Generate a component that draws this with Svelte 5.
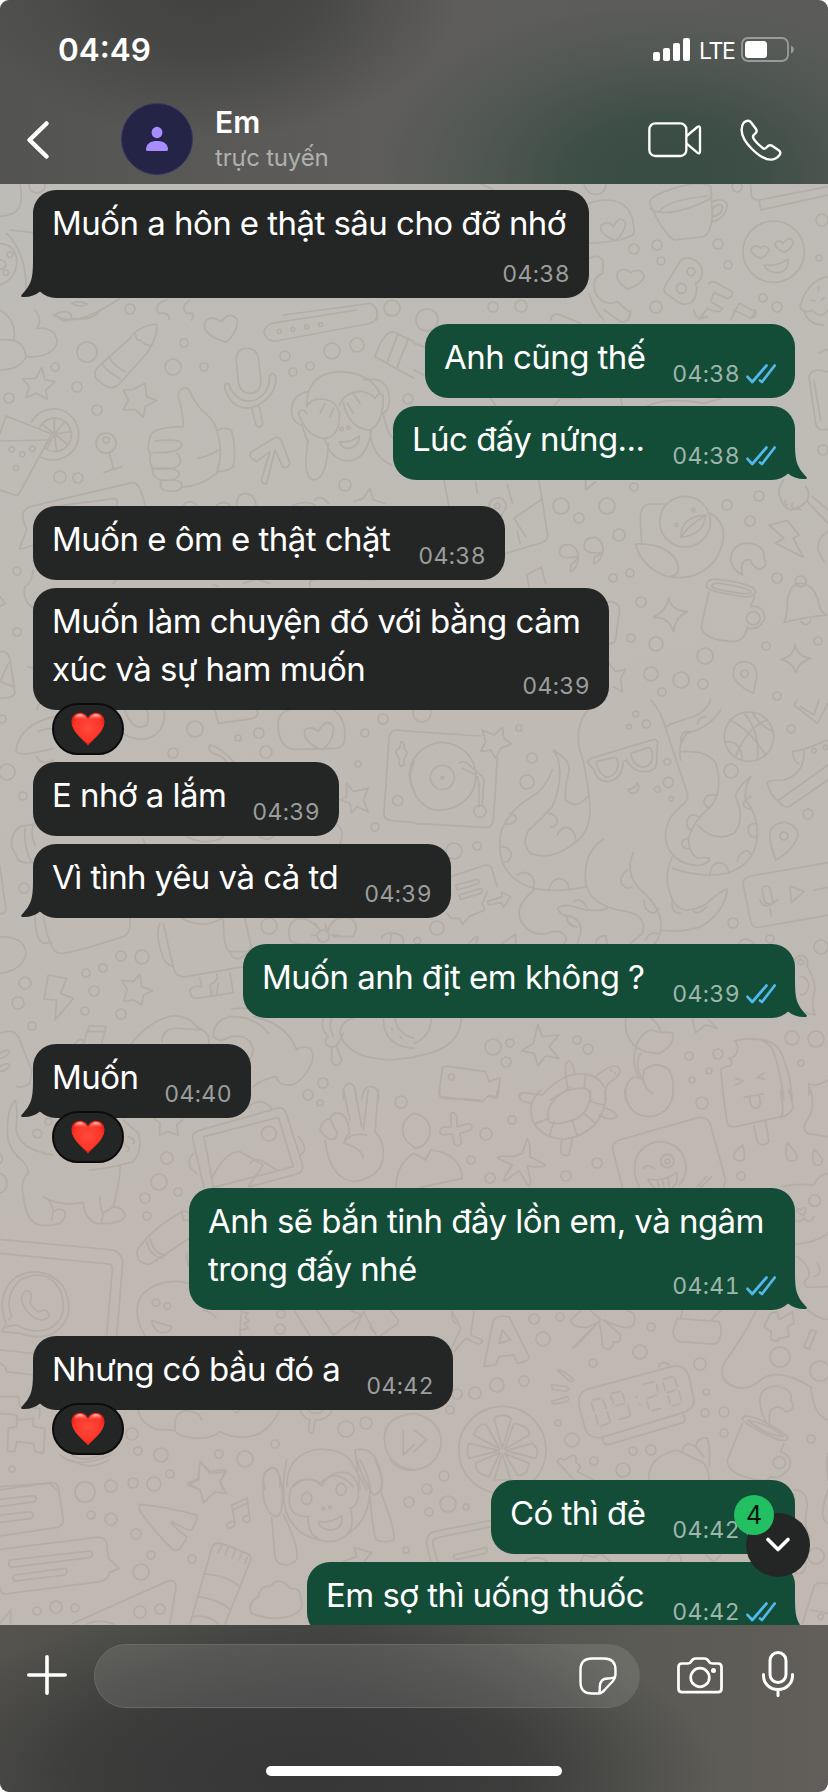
<script lang="ts">
    type Message = {
        lines: string[];
        time: string;
        width: number;
        mine?: boolean;
        tail?: boolean;
        tall?: boolean;
        heart?: boolean;
        last?: boolean; // last bubble of a group
    };

    const messages: Message[] = [
        { lines: ['Muốn a hôn e thật sâu cho đỡ nhớ'], time: '04:38', width: 556, tail: true, tall: true, last: true },
        { lines: ['Anh cũng thế'], time: '04:38', width: 370, mine: true },
        { lines: ['Lúc đấy nứng...'], time: '04:38', width: 402, mine: true, tail: true, last: true },
        { lines: ['Muốn e ôm e thật chặt'], time: '04:38', width: 472 },
        { lines: ['Muốn làm chuyện đó với bằng cảm', 'xúc và sự ham muốn'], time: '04:39', width: 576, heart: true },
        { lines: ['E nhớ a lắm'], time: '04:39', width: 306 },
        { lines: ['Vì tình yêu và cả td'], time: '04:39', width: 418, tail: true, last: true },
        { lines: ['Muốn anh địt em không ?'], time: '04:39', width: 552, mine: true, tail: true, last: true },
        { lines: ['Muốn'], time: '04:40', width: 218, tail: true, heart: true, last: true },
        { lines: ['Anh sẽ bắn tinh đầy lồn em, và ngâm', 'trong đấy nhé'], time: '04:41', width: 606, mine: true, tail: true, last: true },
        { lines: ['Nhưng có bầu đó a'], time: '04:42', width: 420, tail: true, heart: true, last: true },
        { lines: ['Có thì đẻ'], time: '04:42', width: 304, mine: true },
        { lines: ['Em sợ thì uống thuốc'], time: '04:42', width: 488, mine: true, tail: true },
    ];

    // Wallpaper: small bubbles as x, y, r
    const dots = [
        [87,352,10],[173,367,8],[184,343,4],[204,367,4],[77,387,5],[55,367,4],[9,398,5],[97,410,5],[285,356,5],[293,372,4],
        [310,366,4],[332,351,8],[357,345,7],[60,477,6],[78,478,5],[106,443,10],[106,440,3],[345,485,6],[408,399,5],[17,571,4],[17,632,4],
        [427,320,11],[561,506,8],[579,518,5],[607,506,8],[619,535,6],[634,487,4],[613,578,4],[630,573,4],[641,602,5],[631,638,4],
        [656,644,7],[705,656,8],[651,674,7],[681,680,8],[703,684,5],[662,692,4],[727,505,5],[759,496,5],[750,521,5],[777,578,5],
        [766,646,4],[818,641,4],[777,696,4],[823,450,5],[634,249,5],[657,245,5],[661,261,4],[718,244,5],[728,265,4],[656,307,6],
        [521,306,6],[493,307,5],[737,187,5],[822,220,6],[819,258,3],[763,298,4],[777,307,5],[130,309,5],[392,308,8],[37,185,8],
        [2,719,4],[7,772,8],[23,796,4],[195,729,8],[238,738,3],[259,733,5],[266,752,6],[173,753,5],[365,733,4],[383,719,5],
        [358,764,3],[375,827,4],[269,926,8],[142,957,7],[121,956,5],[103,968,4],[86,973,4],[25,983,6],[18,1003,6],[94,991,5],
        [85,1011,4],[121,1014,5],[32,1026,4],[24,888,5],[323,1083,5],[422,713,9],[519,728,3],[532,758,5],[527,782,7],[477,846,4],
        [454,851,8],[437,928,7],[791,729,4],[731,771,7],[808,814,5],[733,923,5],[770,939,4],[821,947,7],[493,1047,8],[510,1043,4],
        [506,1062,5],[577,1040,4],[588,1049,5],[689,1056,4],[718,1054,5],[709,1071,3],[692,1080,3],[792,1038,7],[816,1039,8],[801,1063,3],
        [308,1095,5],[320,1103,3],[401,1102,6],[167,1158,6],[159,1182,8],[178,1192,4],[145,1198,5],[147,1216,4],[281,1314,4],[280,1329,5],
        [132,1434,6],[138,1451,4],[161,1455,7],[219,1454,4],[245,1459,8],[275,1444,4],[346,1429,8],[366,1423,6],[170,1474,4],[12,1469,3],
        [702,1103,6],[512,1120,4],[486,1134,6],[471,1160,4],[490,1178,5],[566,1176,5],[597,1163,5],[741,1176,4],[534,1319,5],[560,1317,4],
        [543,1339,7],[651,1327,4],[640,1352,7],[593,1363,4],[700,1364,6],[497,1385,7],[524,1381,5],[475,1393,6],[457,1394,5],[450,1410,4],
        [558,1423,3],[572,1440,7],[633,1451,4],[651,1450,5],[623,1470,7],[594,1461,4],[705,1413,4],[724,1412,5],[724,1433,4],[706,1392,3],
        [811,1439,4],[780,1357,10],[820,1371,10],[444,1476,5],[85,1492,10],[111,1486,6],[133,1483,5],[154,1484,7],[91,1515,4],[111,1519,6],
        [136,1534,5],[151,1555,4],[141,1572,8],[192,1559,4],[37,1611,4],[56,1607,6],[75,1608,4],[140,1612,6],[160,1609,5],[406,1550,3],
        [409,1502,5],[427,1489,5],[448,1504,8],[429,1512,4],[466,1507,3],[816,1556,8],
    ];

    // Wallpaper doodles, drawn at 3x in tiles
    const doodles = [
        { x: 0, y: 0, paths: [
            'M60 555Q80 650 0 648M0 730Q50 735 50 785T0 855M30 690L100 698M20 700Q80 760 78 870',
            'M160 945Q210 970 260 950T360 895M215 910Q235 900 262 912Q240 925 215 910',
            'M500 900Q460 910 475 940Q510 935 508 960M570 900Q540 920 560 940Q590 935 575 960',
            'M850 945L1110 910Q1140 925 1130 960',
            'M3 780a14 14 0 1 0 .1 0M18 810a8 8 0 1 0 .1 0M30 755a9 9 0 1 0 .1 0',
        ] },
        { x: 414, y: 0, paths: [
            'M708 610Q700 590 780 565T890 560L895 650Q890 700 870 710L780 720Q740 690 708 610M708 625Q740 650 820 625T893 580M735 635Q760 600 880 588',
            'M893 605Q930 590 940 615Q935 655 890 668M900 620Q925 605 925 625Q920 645 900 650Q890 640 900 620',
            'M987 755a92 92 0 1 0 184 0a92 92 0 1 0 -184 0M1040 775Q1005 760 1012 745Q1025 730 1040 745Q1055 730 1065 750Q1060 765 1040 775M1112 757Q1080 745 1084 730Q1095 715 1108 730Q1125 705 1138 725Q1135 745 1112 757M1050 795Q1090 800 1122 778Q1125 815 1090 818Q1060 818 1050 795',
            'M525 610Q580 590 620 610T660 700Q640 725 525 730M605 722Q550 700 562 675Q585 660 598 680Q620 640 635 670Q630 700 605 722',
            'M640 868Q600 840 612 815Q630 800 650 818Q680 800 692 830Q680 855 640 868',
            'M800 782Q810 770 830 775Q870 790 863 825Q860 845 845 850Q855 880 835 905Q815 920 790 905L755 880Q745 870 755 855ZM831 803a12 12 0 1 0 .1 0M802 850a15 15 0 1 0 .1 0',
            'M885 850Q895 840 910 850L955 875Q960 890 940 895L900 878L890 905L925 925Q920 945 880 925L855 960M975 910L1025 935Q1030 950 1010 955M975 910L950 960',
            'M1010 555L1012 585Q1015 600 1035 600L1242 560M1035 600L1040 630L1242 585',
            'M1242 830Q1180 840 1158 920Q1170 945 1195 930Q1220 960 1242 930M1190 900l14 3M1215 860l-2 12M1222 900l10 -6',
            'M525 775Q555 760 568 785L565 820Q530 835 545 880Q560 910 595 910L610 905L650 940L640 960M525 880Q540 930 570 960',
            'M510 555Q525 590 555 582Q578 570 575 552M200 552L240 570',
        ] },
        { x: 0, y: 310, paths: [
            'M470 42Q410 50 390 85L290 175Q275 200 300 215Q330 245 355 225L440 130Q475 80 470 42ZM405 70Q410 95 420 90Q440 110 455 105M325 140Q345 170 375 185M305 160Q325 190 360 205',
            'M678 97Q610 75 613 42Q625 10 665 35Q690 0 712 30Q715 65 678 97',
            'M795 75Q785 55 815 40L1070 0M1130 0Q1140 35 1100 42L830 93Q805 97 795 75M838 58a6 6 0 1 0 .1 0M878 52a6 6 0 1 0 .1 0M920 45a6 6 0 1 0 .1 0M962 38a6 6 0 1 0 .1 0',
            'M708 150Q710 115 740 115Q772 115 776 150L783 215Q780 250 750 250Q720 250 715 215ZM685 220Q672 220 674 235Q700 310 765 290Q830 260 828 200Q815 180 808 200Q810 250 765 270Q710 285 685 220M755 295L768 345Q780 360 788 340L778 290',
            'M108 205L125 172L135 210L165 215L138 240L142 268L110 250L78 262L88 230L68 207ZM400 238L435 220L440 260L470 272L437 288L430 322L405 298L370 300L385 270L370 240Z',
            'M535 260Q535 230 565 235Q585 280 610 305Q650 335 655 380Q670 430 650 490Q600 530 545 532Q535 550 490 540Q475 530 485 510Q450 500 460 475Q445 460 452 430Q435 415 455 370Q480 350 550 350Q550 310 535 260M465 393Q550 385 545 405Q540 430 460 428M455 475Q535 485 542 455Q540 435 530 430M460 475Q530 470 538 490Q535 515 485 510M525 510Q550 515 545 532M655 360Q680 350 695 362Q710 420 700 470Q680 485 655 485M592 445Q625 440 655 420',
            'M755 445Q745 435 755 425L825 383Q840 380 845 395L870 460Q860 480 848 470L825 420L800 520Q785 525 785 508L810 425L770 455Z',
            'M18 318L0 370M18 318L155 372L55 555L45 555L0 540M0 393L150 390M35 410a8 8 0 1 0 .1 0M67 425a8 8 0 1 0 .1 0M97 408a8 8 0 1 0 .1 0M48 466a8 8 0 1 0 .1 0',
            'M95 335Q120 295 170 297A77 77 0 0 1 165 450Q140 450 120 440M118 355A50 50 0 1 1 135 415M163 372L163 325M163 372L195 335M163 372L213 365M163 372L205 405M163 372L170 422M163 372L140 415M163 372L130 345M328 430L340 475M312 487L365 470',
            'M920 290Q920 185 1025 185Q1110 190 1140 250M920 290Q935 265 965 267Q1010 270 1018 310Q1020 385 970 385Q920 380 895 310Q905 290 920 310M960 310L975 280M990 320L1000 295M1018 285L1030 265Q1060 240 1090 245Q1120 255 1125 265Q1140 240 1150 260Q1150 340 1110 360Q1050 360 1030 280M1060 310L1042 280M1080 280L1060 250M925 245Q870 255 875 310Q880 340 905 345M1090 210Q1160 195 1168 260Q1170 300 1150 310M905 345L925 400M925 390Q905 500 940 510Q980 510 985 400M975 385Q990 450 1045 453Q1100 450 1115 360M1020 395Q1050 400 1078 378Q1080 405 1050 415Q1020 415 1020 395M1025 352a5 5 0 1 0 .1 0M1045 348a5 5 0 1 0 .1 0M1110 360Q1115 440 1175 465M1150 310Q1160 370 1180 385',
            'M0 0Q50 30 42 90M0 90Q70 80 78 140Q60 180 0 180M78 140Q160 145 172 95Q165 50 110 55Q130 30 105 0M170 10Q215 -5 215 25Q195 45 168 15M215 25Q280 35 300 0',
            'M1180 65Q1150 65 1125 140L1242 205M1180 65L1242 95M1195 70L1162 155M1225 85L1190 175',
            'M435 585Q420 520 400 517L90 590Q65 600 68 625L80 660L58 715Q60 720 100 705M160 590L345 565Q355 570 350 585M710 585Q710 550 738 550Q765 555 768 585M945 570Q960 550 985 580M1062 575L1090 565L1110 535L1120 570L1155 580M550 585Q570 565 590 585M650 585Q670 570 690 585M880 585Q920 570 945 585',
            'M100 780Q95 820 75 830Q65 870 100 895M340 820Q345 805 370 805M640 825L655 828M730 820L770 808L810 820M930 830Q925 810 945 808M1085 808L1130 808',
            'M0 860L15 880L0 890M0 1025Q25 1020 30 1050L45 1150Q40 1165 0 1165M0 1115L25 1060M0 1115L40 1130M85 1070L100 1075M110 1200Q120 1170 140 1160',
        ] },
        { x: 414, y: 310, paths: [
            'M680 645Q675 585 705 582L755 582M665 702Q720 700 755 720Q795 745 793 780Q790 800 760 800Q680 770 665 702M680 645L683 702M760 800Q860 815 910 740Q955 650 890 610M737 635a76 76 0 1 0 152 0a76 76 0 1 0 -152 0M800 682Q800 620 875 615Q870 675 800 682M800 682Q820 650 875 615M787 640a5 5 0 1 0 .1 0M838 595a5 5 0 1 0 .1 0',
            'M470 765Q490 750 490 740Q435 750 437 725Q440 700 470 705Q495 715 493 745Q490 775 470 785ZM540 740Q560 735 562 728Q510 735 510 705Q515 680 545 682Q570 695 567 725Q560 755 540 762Z',
            'M90 510L105 590M375 510L400 670Q405 690 385 697L275 730M380 570L300 625L335 680M185 515L190 550M280 525L295 580M310 665L318 700M225 590Q225 565 255 563Q280 570 275 595L260 620M250 580a8 8 0 1 0 .1 0M345 830L338 795L382 772L395 820',
            'M950 750Q955 695 1010 700Q1055 710 1050 745Q1065 770 1035 778Q1015 770 1010 750Q975 745 985 795Q955 780 950 750M1065 645L1120 632L1155 675L1138 685L1168 742L1085 700L1110 685Z',
            'M878 830Q875 805 910 808Q1020 820 1025 845Q1020 870 960 855Q885 845 878 830M893 828Q895 815 930 822Q1010 835 1012 848Q990 855 950 845Q895 838 893 828M885 845L862 950Q865 990 960 995Q995 990 1000 950M1022 860L1010 890Q1050 885 1052 925Q1040 960 1000 955M1018 905a20 20 0 1 0 .1 0',
            'M1110 937Q1120 920 1120 870Q1130 820 1158 820Q1200 820 1215 880Q1220 910 1240 915Q1180 920 1110 937M1160 798a16 16 0 1 0 .1 0M1160 935Q1180 955 1190 930',
            'M765 865Q770 900 820 905Q785 920 778 965Q765 920 718 922Q755 905 765 865M1143 1003Q1150 1040 1190 1045Q1155 1055 1146 1088Q1135 1055 1100 1048Q1140 1040 1143 1003',
            'M958 1095Q955 1055 995 1055Q1030 1060 1028 1100L1018 1150Q965 1125 958 1095M992 1080a11 11 0 1 0 .1 0M585 1060L605 1085L635 1078L620 1105L625 1145L598 1130',
            'M585 875Q615 875 617 900L605 985Q600 1005 585 1000M1185 200Q1190 180 1215 180L1242 185M1185 200L1205 340Q1210 365 1242 358M1200 210L1220 330M1215 130Q1225 120 1242 118',
            'M1110 510Q1085 540 1100 565Q1105 590 1130 600Q1160 595 1180 570Q1190 545 1175 530M1115 570q-5 15 5 15M1135 580q-5 15 5 15M1150 590q0 10 10 8M1180 575L1242 640M1195 560L1242 600M1242 665Q1210 680 1212 720L1230 755',
            'M515 510L515 540L545 515M570 0L620 35Q650 40 650 0M840 0Q845 35 880 20M960 0L1010 25L1025 0M1170 0Q1180 45 1230 45M0 100L30 110M0 180L30 195M230 265L245 288M420 288L440 265L500 265M410 30Q415 5 440 15L500 40M620 265L625 288M700 288Q760 260 870 280L920 265',
        ] },
        { x: 0, y: 700, paths: [
            'M160 50Q60 75 48 150Q50 175 160 145M115 95Q150 80 158 90M110 170Q130 200 160 180M365 100Q440 140 480 90Q500 55 490 30M375 30Q400 100 440 75Q450 50 440 30M645 30L655 70L760 55Q780 45 770 30',
            'M835 60Q845 30 870 30M835 60Q830 140 880 148L1010 145Q1035 140 1035 110Q1035 50 1000 30M960 148Q905 120 915 90Q935 75 955 95Q980 50 1000 80Q1005 115 970 148Z',
            'M1242 95L1190 90Q1168 92 1167 115L1152 340Q1150 360 1175 362L1242 368M1203 125Q1215 125 1212 145Q1230 160 1212 175L1212 195Q1195 210 1198 175Q1178 155 1198 145ZM1193 287a15 15 0 1 0 .1 0M1242 185Q1220 240 1242 270',
            'M630 135Q660 140 700 185M630 135Q620 150 640 160Q670 170 680 185M1040 250L1060 275L1105 265L1090 300L1105 335L1070 320L1055 340L1050 310L1020 300L1040 290Z',
            'M115 370L60 380Q30 400 35 440L55 480Q75 495 110 485M75 385Q70 440 95 488M100 375Q90 400 105 435M990 360Q1040 380 1020 430M560 410Q620 440 670 410M780 410Q800 425 820 410M430 418L435 432',
            'M0 500L18 630Q10 645 0 640M0 710Q75 710 78 760Q70 810 0 820M105 640Q105 720 130 730L155 728M130 650Q150 760 180 760Q200 765 370 710Q395 700 390 655M545 655Q610 690 665 655M480 670Q465 700 485 760Q490 790 520 800M490 670Q505 740 520 800Q525 835 560 830L730 800M670 655Q670 750 690 755L740 755Q760 750 750 725L735 655M690 755Q695 780 720 775L745 760',
            'M570 870Q570 895 590 895L700 878L690 820M570 870Q580 855 605 860L600 835M635 885L630 855M650 822Q660 840 630 855M655 850L650 880',
            'M145 825L200 835L182 880L220 895L165 960L170 900L132 897ZM365 840L400 845L420 822L425 860L458 872L430 885L425 915L400 900L370 905L382 870Z',
            'M870 720Q855 660 905 655Q930 655 960 690M870 720Q880 735 930 732M985 690Q1000 645 1050 655Q1080 670 1060 710L1000 710M970 690a18 18 0 1 0 .1 0M945 670L960 690M935 706L950 706M975 672L980 688M995 705L1020 705M1145 715Q1150 695 1185 700Q1215 705 1210 730M1175 700L1170 730',
            'M395 1030Q450 960 520 947Q570 950 590 980Q635 1000 625 1030M485 1025Q490 980 540 985L610 990M640 1010Q640 960 690 950Q760 945 805 1000M640 1010Q660 1030 690 1010Q750 1000 760 1050L750 1080M760 950Q860 970 890 1050Q900 1035 930 1045Q945 1060 935 1090Q900 1160 860 1155Q830 1150 830 1130Q790 1135 760 1160M695 928Q730 920 760 930',
            'M970 955Q960 985 985 1010Q970 1020 980 1035Q1000 1050 1015 1030L1030 1000M995 955Q985 980 1000 1010M1010 1040L1025 1080Q1010 1110 995 1085L995 1040M1020 1000Q1025 960 1060 955M1020 1000Q1040 1075 1170 1080L1242 1072M1150 955Q1150 1040 1242 1045M1185 955Q1190 1000 1242 1015M1200 1010l5 6M1175 985l2 6',
            'M0 1000Q40 985 55 1010L95 1110L90 1150Q70 1165 50 1160M0 1060Q25 1045 28 1055Q25 1070 0 1075M0 1100Q20 1085 30 1095Q25 1110 0 1115M250 1030L268 978L318 980L305 1028M262 995L315 995M225 1030Q240 1010 255 1025',
            'M1030 1200Q1025 1150 1050 1150Q1070 1155 1068 1200M1085 1200Q1090 1155 1115 1160Q1140 1165 1135 1200',
        ] },
        { x: 414, y: 700, paths: [
            'M0 95L200 108M250 175L238 360Q235 385 210 382L0 370M-14 220A100 100 0 1 1 160 295Q120 335 60 330Q-5 310 -14 220M85 196a36 36 0 1 0 .1 0M85 229a4 4 0 1 0 .1 0M135 190Q145 180 160 190L205 230Q215 240 208 260L205 315M145 205L185 225Q195 235 195 260L195 320M198 316a18 18 0 1 0 .1 0',
            'M205 90L240 105L265 82L270 115L292 132L260 145L245 175L230 150L200 155L215 125Z',
            'M525 290Q515 200 495 140Q480 30 575 0M710 0Q740 30 755 85L820 280Q825 300 800 320Q750 360 755 420Q770 490 850 497Q890 490 885 475Q870 470 850 475Q820 455 825 410Q840 360 890 320Q930 270 905 190Q880 150 800 155M755 80Q800 60 840 50Q880 30 890 0M800 180Q790 130 820 100Q890 80 920 30',
            'M520 185L530 175L720 118Q735 120 730 135L728 190Q725 215 690 215Q655 215 638 180L628 185Q625 240 580 245Q550 245 540 210ZM547 185L600 172Q615 175 612 200Q605 230 575 232Q550 215 547 185M650 160L705 142Q718 150 715 175Q710 200 685 202Q655 195 650 160',
            'M525 290Q540 390 480 430Q410 485 350 460Q320 430 345 390Q380 360 415 320Q450 240 430 170Q410 140 425 155Q470 180 465 215Q450 270 455 300Q490 330 520 290M415 210Q400 250 370 280Q280 330 260 400Q240 530 360 565Q430 580 515 560M288 340Q310 345 305 360Q295 375 275 372M260 440Q290 440 292 465Q285 490 270 485M310 525Q330 510 350 525Q365 540 358 560M405 570Q410 540 435 535Q465 540 465 570M405 340Q430 345 430 365Q425 385 410 380M430 405Q440 380 460 382Q485 390 485 420',
            'M360 570Q300 620 320 660Q345 710 400 700Q440 685 455 710Q460 720 450 730M568 418Q505 460 515 550Q530 620 640 635Q700 650 685 700L650 730M658 458Q630 520 680 570Q750 630 740 690Q735 720 720 732M775 470Q750 520 765 570Q780 630 820 630Q870 625 890 600Q930 565 940 568Q930 640 860 680Q800 700 740 690M430 625Q450 610 480 620Q540 640 580 625M430 625Q440 650 475 650Q505 665 500 700L490 730M640 510Q615 530 622 550Q635 570 655 560M690 600Q690 635 720 640L735 625M480 605Q500 590 518 620M458 650Q460 680 490 680M545 730Q550 705 575 708L580 730M695 720Q705 695 730 700M775 600Q770 640 800 640M835 630Q850 650 878 620',
            'M775 505Q860 535 940 520Q1030 490 1030 400Q1030 340 995 300Q990 260 1010 230Q970 260 965 290Q995 360 960 400Q900 430 850 375M905 285Q870 280 870 310Q880 330 895 315M855 350Q830 335 820 360Q815 385 830 390M820 415Q800 420 805 435Q810 448 825 445M1010 290Q985 300 990 320L1010 328M1025 370Q1000 370 1003 395Q1010 415 1030 412M970 485Q975 455 1000 452L1015 465M888 525Q890 490 915 488Q940 490 945 520M800 125Q800 90 830 95M850 72Q855 50 875 50',
            'M665 33a9 9 0 1 0 .1 0M645 73a7 7 0 1 0 .1 0M697 60a12 12 0 1 0 .1 0M760 175a10 10 0 1 0 .1 0M763 232a15 15 0 1 0 .1 0M730 259a9 9 0 1 0 .1 0M772 289a7 7 0 1 0 .1 0M642 268Q665 265 670 248Q680 265 665 278Q650 285 642 268',
            'M931 110a74 74 0 1 0 148 0a74 74 0 1 0 -148 0M965 170Q1000 80 1060 60M945 60Q1000 80 1055 165M990 38Q1040 100 1030 180M935 125Q980 120 985 180M1015 38Q1040 80 1078 95',
            'M1140 15L1210 70L1242 10M1140 15L1150 0M1160 20L1200 45L1215 0M1135 155L1170 148Q1175 220 1110 240Q1055 240 1060 250Q1070 290 1095 305Q1110 325 1125 320L1242 240M1170 148L1242 120M1095 300L1242 195M1135 155Q1140 190 1155 190M1200 145a7 7 0 1 0 .1 0M1235 135a7 7 0 1 0 .1 0',
            'M1085 480Q1060 410 1070 390Q1085 365 1115 367Q1150 375 1152 405Q1140 450 1085 480M1110 396a12 12 0 1 0 .1 0M1242 488L1010 528Q985 535 987 550L1010 665Q1015 685 1035 682L1242 645M1128 558L1132 608L1170 575ZM1045 570Q1045 558 1057 558Q1070 560 1070 575L1077 605Q1070 615 1060 610Q1052 610 1050 600ZM1038 600Q1050 635 1090 600M1068 625L1072 648M1200 570L1242 562',
            'M110 530L215 495Q232 495 235 510L250 560M100 640L110 655L135 655L147 673L165 650L212 630L205 610L220 575M125 555L190 538Q200 545 190 552L130 570ZM135 585L200 565Q210 572 200 580L140 598ZM220 605L265 590L262 578L290 590L268 622L262 608L225 615ZM165 730Q185 705 192 712L185 730M265 730L305 702L305 730M10 712a10 10 0 1 0 .1 0',
            'M1142 785Q1145 765 1165 767Q1185 775 1180 800Q1210 850 1200 880Q1190 930 1205 945L1160 935M1158 830Q1180 830 1185 855Q1180 885 1160 885M1160 778a8 8 0 1 0 .1 0M975 730Q990 705 1020 730',
            'M372 973L385 1010L435 1005L405 1040L435 1075L395 1068L372 1097L360 1060L323 1052L358 1030ZM635 955Q630 1010 665 1040Q690 1060 735 1060Q780 1040 778 1000Q760 995 740 998Q735 970 710 955M665 1040Q680 1000 710 990L740 998M680 1060Q660 1090 680 1130M665 1045Q650 1090 675 1135M690 1110Q730 1080 765 1110Q785 1140 775 1200M635 1200Q630 1145 660 1132Q690 1130 690 1150Q700 1175 718 1180M690 1110Q685 1130 690 1150',
            'M85 1105Q90 1095 110 1100L215 1115L225 1145L258 1133L252 1190L225 1190M85 1105L75 1180Q75 1195 95 1195L200 1200M112 1122a9 9 0 1 0 .1 0M455 1125Q450 1085 465 1083Q480 1090 482 1125M545 1130Q590 1090 612 1100Q630 1120 590 1145Q570 1155 575 1200M385 1185Q440 1125 490 1122Q550 1120 570 1160M320 1200Q310 1180 330 1178L385 1185M455 1130L462 1170M515 1125L510 1165M410 1200Q460 1160 515 1165Q530 1175 530 1200M590 1110l4 4M602 1118l4 4',
            'M920 1110Q925 1100 948 1098Q960 1085 945 1075Q970 1070 970 1050Q975 1035 962 1022Q1060 1000 1080 1060Q1100 1120 1110 1200M920 1110L930 1200M1010 1018Q1090 1010 1110 1080Q1130 1130 1135 1200M965 1135L987 1142L965 1155M1050 1120L1028 1133L1052 1138M1185 1150Q1200 1165 1242 1140M1185 1150L1185 1185M835 955L845 998L875 975L910 985L885 960M0 1070Q140 1050 142 955M0 1030Q50 1010 52 955',
        ] },
        { x: 0, y: 1090, paths: [
            'M45 30Q20 60 22 130Q25 180 65 210Q85 230 85 250Q60 270 70 320Q80 400 120 405Q140 410 180 400Q200 380 195 365Q180 350 160 365Q155 330 130 320Q180 350 250 338Q255 390 290 400Q360 405 375 380Q375 355 340 350M160 365L155 390M340 350Q360 270 360 230M45 30Q55 60 48 120Q60 180 160 195M310 370L340 350M300 320Q300 360 310 370L305 395M270 240Q330 235 400 215Q430 180 415 130L370 90M385 140q25 10 15 20M370 160q30 20 10 25M112 118a13 13 0 1 0 .1 0M145 85a10 10 0 1 0 .1 0M0 190Q15 210 0 220M0 250Q25 260 20 290Q10 310 0 308',
            'M460 83L480 100L478 135L505 125L535 135L530 105L548 90M612 292L578 145Q575 130 595 122L830 55Q850 50 858 68L908 225Q910 245 890 252L750 290M612 140L835 82L880 230L640 292ZM635 265Q680 180 720 185L790 225L745 290M750 220Q770 200 790 215L835 243M807 109a22 22 0 1 0 .1 0M740 55Q780 15 815 55M580 190Q560 210 572 235L590 250M895 140Q920 170 912 185L902 195',
            'M960 120Q965 90 990 85Q1000 65 1020 70Q1045 80 1048 130Q1030 145 1035 160Q1085 175 1090 205M960 120Q980 150 1000 148Q1015 140 1010 125Q1000 110 990 85M975 150Q990 270 1065 275Q1150 260 1150 190Q1150 150 1125 125L1135 0M1050 90L1030 0M1065 0L1085 110M1105 0L1090 120M1030 160Q1050 125 1100 135M1242 70Q1200 90 1210 135Q1220 160 1242 170M1242 190Q1190 220 1188 290',
            'M412 480Q450 420 545 365Q555 360 568 370M412 480Q405 520 450 523L568 445M440 455Q450 500 490 505M450 445Q460 490 497 497M545 365L550 390L568 392M560 490Q558 510 567 530',
            'M0 448L340 480Q368 490 368 520L350 738M0 490L325 522Q338 525 337 540L320 735M5 725L18 700Q-15 610 50 560Q130 520 190 590Q235 680 160 730Q120 750 60 730L5 725M25 690L35 680Q10 620 60 570Q140 530 180 600Q210 680 150 715Q100 735 50 705L18 710M75 605Q90 595 95 620L90 635Q95 655 115 665L135 660Q155 675 145 683Q110 705 75 655Q55 620 75 605',
            'M435 738Q390 660 430 610Q490 560 567 580M610 660Q640 670 648 683M468 627a11 11 0 1 0 .1 0M502 638a10 10 0 1 0 .1 0M455 692L515 710Q510 730 485 728Q460 725 455 692M725 660Q720 700 720 738M725 665L745 670L735 680L748 695L733 700L745 715L725 720M885 665L930 738M950 660L1000 735L1085 675L1050 660M1170 660L1195 690Q1195 705 1180 710L1140 738M1090 665L1065 720M1090 665L1130 738M1110 710l10 15',
            'M0 780L100 790M0 820Q20 830 20 845L100 855M0 920L55 920L60 950L120 955M0 970L50 975L55 990L100 985L100 1010L135 1015L130 1090L105 1085L100 1060L50 1055L45 1085L22 1085L25 1015L50 1010L50 975M120 955L118 985M180 1095Q230 1140 330 1095M215 1095Q250 1120 300 1095M0 1190L150 1180L170 1200',
            'M415 960Q420 1000 470 1018L525 1020Q530 1040 590 1045Q640 1045 660 1025Q720 1055 780 1030Q820 1005 838 962M525 1015Q520 970 555 962Q600 965 605 990M900 960Q910 985 930 990L925 1020Q930 1035 940 1025L945 990Q985 990 995 960M925 960Q945 980 970 960M700 960Q710 975 718 960',
            'M1242 970Q1150 980 1153 1050Q1160 1130 1242 1140M1210 1020L1210 1095L1242 1065M795 1200Q780 1140 815 1135Q840 1130 840 1190M860 1190Q860 1090 960 1077Q1030 1080 1050 1110Q1080 1160 1100 1200M1065 1080Q1110 1070 1130 1110Q1150 1160 1145 1200M1065 1080L1080 1200M880 1190Q920 1150 960 1180Q1010 1130 1060 1190M600 1115L630 1150L680 1145L660 1175L670 1200M600 1115L595 1165L565 1180L600 1200',
        ] },
        { x: 414, y: 1090, paths: [
            'M75 0L78 20L205 35L225 15L248 25L250 0M405 95Q390 60 430 20L470 -10M405 95Q430 110 490 85Q530 60 530 0M350 60Q355 140 450 148Q560 130 575 30L572 0M350 60Q350 30 380 0M365 100L405 85M405 140L420 95M490 140L475 92M545 100L510 70M570 45L530 35M318 10Q310 25 330 35L355 40M575 55Q610 65 608 80Q590 95 555 75M443 150L440 185Q445 200 465 195L475 145M632 0Q640 80 710 80Q775 70 778 0',
            'M110 70Q125 65 128 80L130 110L165 100Q180 110 170 120L138 130L142 160Q130 175 120 160L115 132L85 135Q70 125 85 112L112 110ZM0 70Q50 80 48 130Q40 170 0 175M0 190L35 210L50 180Q140 190 145 265L20 292',
            'M340 145Q350 160 348 200L395 225Q385 235 340 228L350 275Q345 300 335 275L315 242L275 272Q265 275 275 255L295 225L250 205Q250 195 300 200L325 190Z',
            'M598 185Q590 160 615 150L855 82Q880 80 888 100L935 270L930 290M598 185L625 292M662 235A77 77 0 1 1 795 285M675 290Q660 260 662 235M687 235Q700 220 720 235M760 193a20 20 0 1 0 .1 0M760 207a7 7 0 1 0 .1 0M702 268Q750 275 788 247Q795 280 775 292M702 268Q710 285 720 292M730 272L735 290M745 268L750 290M762 260L765 290M895 258L860 292M878 260L850 290',
            'M925 0L940 100Q945 112 965 110L1100 80Q1110 70 1105 40L1100 0M1125 0L1138 50Q1130 75 1100 82M1020 108L1030 155Q1045 175 1065 155L1055 95M990 22L1048 12M1008 20Q1005 55 1030 55Q1045 45 1035 18M1190 0Q1205 50 1180 90Q1160 115 1180 130L1242 140M985 165Q955 190 960 205Q975 220 990 208Q995 190 985 165M1120 157Q1110 200 1125 212Q1150 215 1150 200Q1145 185 1120 157M1200 178Q1190 215 1205 225Q1225 228 1226 210Q1220 195 1200 178',
            'M1105 290Q1150 280 1200 285Q1210 255 1242 250M1202 315a17 17 0 1 0 .1 0M1150 365Q1145 350 1160 360Q1170 345 1175 362L1168 378ZM1145 390Q1160 400 1170 385Q1190 405 1200 380M1145 462Q1200 460 1242 430M1150 500Q1190 530 1185 560Q1160 580 1180 592L1242 590M1210 520Q1230 550 1200 560M1180 660Q1220 690 1242 688',
            'M115 665L140 715L110 780M180 665L170 735L205 750Q205 770 175 755L155 745L120 785M115 665Q110 690 125 700M210 830L238 690Q250 675 285 680L345 800Q345 815 310 820L300 795L255 800L245 825ZM265 720L255 760L290 750ZM470 690Q475 715 520 712L555 695Q565 740 565 770Q590 790 600 755Q620 765 620 735L570 690Q650 730 660 700Q670 670 640 662M470 690L500 662M555 695L475 775M560 690L485 770M560 690L530 662',
            'M790 685L915 695Q925 710 918 745Q910 765 890 762L800 755Q775 750 778 720ZM805 662L800 685M920 662L890 692M1070 670L1090 665L1095 690L1135 665L1140 700L1120 710L1125 740L1095 745L1090 755L1070 748L1072 725L1050 710ZM1190 720L1207 725L1185 778L1170 770ZM1025 665Q1000 720 930 820Q910 870 960 890Q1000 905 1040 870Q1090 830 1190 890Q1200 980 1242 990',
            'M495 925Q500 900 530 895L780 828Q815 825 825 860L840 930Q840 960 800 970L560 1043Q525 1045 515 1020L495 950ZM565 1045Q570 1070 590 1062L800 1000Q820 995 808 975M735 832Q735 815 755 818Q768 825 765 830',
            'M535 930L560 925M532 938L540 965M567 930L577 955M545 975L552 1003M580 965L588 995M560 1008L585 1000M592 910L618 905M590 918L598 940M625 910L632 932M605 948L632 940M642 945L648 975M615 988L645 980M665 918l4 4M675 940l4 4M690 882L720 875M727 885L732 905M700 925L728 915M698 935L705 955M715 962L740 955M748 868L775 860M747 878L753 900M782 865L790 890M760 908L785 900M762 918L768 940M795 905L802 930M775 948L798 942',
            'M430 840Q440 835 475 865Q480 880 465 872ZM412 885L460 890Q470 905 450 903L415 898ZM412 935L460 920Q470 930 455 936L418 942Z',
            'M134 1080a131 131 0 1 0 262 0a131 131 0 1 0 -262 0M265 1075L240 985Q265 965 292 985ZM272 1077L300 1000Q350 1010 345 1035ZM275 1082L355 1060Q380 1080 365 1105ZM272 1090L345 1120Q340 1160 310 1155ZM265 1092L290 1170L240 1170ZM258 1088L225 1160Q180 1150 185 1120ZM255 1082L165 1105Q155 1080 165 1060ZM258 1077L180 1035Q185 1005 215 1002Z',
            'M0 970Q80 990 82 1055Q75 1130 0 1140M0 1020L38 1048L0 1085M1038 935Q1035 890 1090 888Q1140 900 1130 930Q1150 960 1115 965Q1095 945 1080 955Q1060 960 1068 1010Q1040 980 1038 935M985 985Q990 970 1040 990Q1120 1030 1122 1045Q1115 1060 1070 1040Q985 1000 985 985M1000 990Q1060 1000 1108 1038Q1060 1040 1000 990M985 1000L940 1110Q940 1150 1010 1165Q1060 1180 1070 1160M1110 1060L1100 1085Q1140 1100 1125 1135Q1100 1170 1070 1160M1096 1100a18 18 0 1 0 .1 0',
            'M705 1170Q700 1100 790 1080L850 1110Q885 1120 885 1170M805 1080Q815 1050 845 1070L870 1100M845 1070Q850 1040 880 1045Q890 1080 885 1130M430 1115L480 1170M430 1115Q435 1100 450 1110L478 1095Q490 1100 485 1115L500 1130L490 1145L540 1170M1242 1090Q1235 1130 1242 1170',
        ] },
        { x: 0, y: 1460, paths: [
            'M0 90L150 68Q172 65 175 85L190 180Q190 195 175 202L0 228M0 118L100 107Q115 112 105 125L0 140M0 165L92 155Q105 162 95 175L0 188M0 268L290 232Q315 230 320 250L325 295L358 325L328 338Q325 360 300 365L15 402Q0 400 0 380M30 300L270 273Q285 280 272 292L32 322Q20 312 30 300M42 345L195 325Q208 332 195 345L45 363Q32 355 42 345',
            'M418 133Q500 140 590 165Q595 175 575 210Q570 215 515 185Q508 190 560 230Q560 240 535 270Q525 275 515 265Q450 200 418 150ZM695 135L742 115L750 180Q745 195 730 182Q725 170 745 165M695 135L705 190Q700 205 685 205Q672 195 690 185L703 185M697 150L742 130',
            'M600 5L630 35L678 28L660 65L680 100L645 95L612 128L600 90L563 75L595 60ZM570 492L635 265Q640 245 665 250L740 280Q755 285 752 300L675 492M615 342Q680 345 720 380M592 410Q650 415 690 448M575 472Q620 460 655 492M665 255L655 278M685 262L675 285M705 272L697 295M725 280L717 300M742 292L735 310',
            'M215 492L500 365Q525 355 528 380L510 492M260 492Q300 475 340 492M0 490L32 450L32 492M755 460Q740 430 775 410Q780 375 810 380Q840 345 870 385Q905 385 900 410Q915 440 890 460Q830 490 755 460',
            'M860 0Q840 100 860 160Q890 230 960 240M868 125Q865 60 920 58Q950 58 965 78Q990 30 1040 38Q1080 55 1075 110Q1070 140 1050 145Q1065 190 1045 220Q1010 255 960 240Q920 220 925 170Q870 170 868 125M920 97a15 18 0 1 0 .1 0M1023 70a15 18 0 1 0 .1 0M970 142a4 4 0 1 0 .1 0M990 138a4 4 0 1 0 .1 0M955 185Q990 190 1025 168Q1030 205 995 210Q960 210 955 185M790 110Q780 30 820 22Q840 25 848 100Q850 160 830 170Q800 165 790 110M815 172L825 290Q830 315 860 315Q890 310 892 290Q890 240 850 165M1070 0Q1090 60 1120 105Q1150 100 1145 50Q1135 20 1125 0M1110 110Q1120 230 1130 240Q1150 250 1180 240Q1190 220 1142 95M1045 220Q1110 180 1110 80Q1100 30 1080 0M215 0Q270 35 325 0M1170 0Q1200 35 1242 30M1030 305L1070 290L1062 262L1115 278L1092 305',
        ] },
        { x: 414, y: 1460, paths: [
            'M50 306L38 250Q35 225 60 215L235 180M72 306L58 260Q50 235 75 232L232 200M120 285L215 263Q225 270 215 280L130 298Q115 295 120 285M330 306Q370 280 400 306M500 306L510 285L540 292L560 280L590 306M760 306Q765 280 790 282Q805 290 800 306M875 285L900 306L920 285M1140 90Q1180 90 1180 140Q1165 200 1190 230M1242 90Q1210 180 1242 190M1242 370Q1200 365 1200 380L1165 492M1190 450L1242 460M1220 462a8 8 0 1 0 .1 0M1145 340Q1170 345 1175 320L1180 270',
        ] },
    ];
</script>

<div class="screen">
    <header>
        <div class="status">
            <span class="clock">04:49</span>
            <div class="status-icons">
                <svg width="38" height="24" viewBox="0 0 38 24" fill="#fff">
                    <rect x="0" y="14" width="7" height="9" rx="2" />
                    <rect x="10" y="10" width="7" height="13" rx="2" />
                    <rect x="20" y="5" width="7" height="18" rx="2" />
                    <rect x="30" y="0" width="7" height="23" rx="2" />
                </svg>
                <span class="lte">LTE</span>
                <svg width="54" height="25" viewBox="0 0 54 25">
                    <rect x="1" y="1" width="46" height="23" rx="6" fill="none" stroke="#989c99" stroke-width="1.8" />
                    <rect x="4" y="4" width="22" height="17" rx="3.5" fill="#fff" />
                    <path d="M50 8.5Q53 10 53 12.5T50 16.5Z" fill="#989c99" />
                </svg>
            </div>
        </div>
        <div class="nav">
            <svg class="back" width="24" height="40" viewBox="0 0 24 40">
                <path d="M20.5 3.5L3.5 20L20.5 36.5" fill="none" stroke="#fff" stroke-width="4.5" stroke-linecap="round" stroke-linejoin="round" />
            </svg>
            <svg class="avatar" width="72" height="72" viewBox="0 0 72 72">
                <circle cx="36" cy="36" r="35.5" fill="#242447" stroke="#37365e" />
                <ellipse cx="36" cy="29.5" rx="5.4" ry="5.8" fill="#a78dff" />
                <path d="M25 46.5C25 40.500 30 38 36 38S47 40.500 47 46.500Q47 48 45 48H27Q25 48 25 46.500Z" fill="#a78dff" />
            </svg>
            <div class="contact">
                <div class="name">Em</div>
                <div class="presence">trực tuyến</div>
            </div>
            <svg class="video" width="54" height="36" viewBox="698 368 162 108" fill="none" stroke="#fff" stroke-width="7" stroke-linejoin="round">
                <rect x="702" y="372" width="111" height="98" rx="18" />
                <path d="M814 410L846 383Q854 378 854 387V456Q854 465 846 460L814 433" />
            </svg>
            <svg class="phone" width="42" height="42" viewBox="974 358 126 126" fill="none" stroke="#fff" stroke-width="7.200" stroke-linejoin="round">
                <path d="M985 369Q999 358 1008 369L1022 388Q1027 396 1019 402Q1009 410 1016 419Q1025 432 1042 445Q1048 450 1055 442Q1061 434 1070 438L1090 452Q1099 458 1092 467Q1082 480 1066 480Q1042 480 1010 448Q978 416 979 390Q979 376 985 369Z" />
            </svg>
        </div>
    </header>

    <main>
        <svg class="wallpaper" width="828" height="1441" viewBox="0 184 828 1441">
            {#each dots as [cx, cy, r]}
                <circle {cx} {cy} {r} />
            {/each}
            {#each doodles as tile}
                <g transform="translate({tile.x} {tile.y}) scale(.33333)">
                    {#each tile.paths as d}
                        <path {d} />
                    {/each}
                </g>
            {/each}
        </svg>

        <div class="messages">
            {#each messages as m}
                <div class="bubble" class:mine={m.mine} class:tall={m.tall} class:heart={m.heart} class:last={m.last} style="width: {m.width}px">
                    {#if m.tail}
                        <svg class="tail" width="24" height="39" viewBox="0 0 24 39">
                            <path d="M12 0C12 19 11 25 .5 36Q-.5 38 1.500 38Q12 38.500 19.700 32L24 26V0Z" />
                        </svg>
                    {/if}
                    {#each m.lines as line}
                        <div class="line">{line}</div>
                    {/each}
                    <div class="meta">
                        <span>{m.time}</span>
                        {#if m.mine}
                            <svg width="30" height="20" viewBox="0 0 30 20" fill="none" stroke="#53b9ec" stroke-width="2.700" stroke-linecap="round" stroke-linejoin="round">
                                <path d="M1.500 12.800L6.300 18L20.500 1.500M14 16.500L16 18L28.700 1.500" />
                            </svg>
                        {/if}
                    </div>
                    {#if m.heart}
                        <div class="reaction">
                            <svg width="34" height="34" viewBox="0 0 34 34">
                                <defs>
                                    <radialGradient id="heart-fill" cx=".5" cy=".45" r=".6">
                                        <stop offset="0" stop-color="#ff4a3c" />
                                        <stop offset=".7" stop-color="#fb3427" />
                                        <stop offset="1" stop-color="#dc160e" />
                                    </radialGradient>
                                    <linearGradient id="heart-shine" x2="0" y2="1">
                                        <stop offset="0" stop-color="#ffe1dc" stop-opacity=".95" />
                                        <stop offset="1" stop-color="#ff6a5c" stop-opacity="0" />
                                    </linearGradient>
                                </defs>
                                <path d="M17 33.500C13 28 .5 20 .5 10C.5 4 4.500 .8 9 .8C13 .8 15.800 3.300 17 6.500C18.200 3.300 21 .8 25 .8C29.500 .8 33.500 4 33.500 10C33.500 20 21 28 17 33.500Z" fill="url(#heart-fill)" />
                                <path d="M2.500 8Q4 2 9 2Q13.500 2 15.500 8Q9 4.500 2.500 8ZM18.500 8Q20.500 2 25 2Q30 2 31.500 8Q25 4.500 18.500 8Z" fill="url(#heart-shine)" />
                            </svg>
                        </div>
                    {/if}
                </div>
            {/each}
        </div>

        <div class="jump">
            <svg width="26" height="16" viewBox="0 0 26 16" fill="none" stroke="#fff" stroke-width="3.600" stroke-linecap="round" stroke-linejoin="round">
                <path d="M3 2.500L13 12.500L23 2.500" />
            </svg>
            <span class="badge">4</span>
        </div>
    </main>

    <footer>
        <div class="composer">
            <svg class="plus" width="40" height="40" viewBox="0 0 40 40">
                <path d="M20 1.800V38.200M1.800 20H38.200" stroke="#fff" stroke-width="3.600" stroke-linecap="round" />
            </svg>
            <div class="input">
                <svg width="38" height="38" viewBox="0 0 38 38" fill="none" stroke="#fff" stroke-width="2.400" stroke-linejoin="round">
                    <path d="M19.500 36.500H13Q1.500 36.500 1.500 25V13Q1.500 1.500 13 1.500H25Q36.500 1.500 36.500 13V17.500Q36.500 21 34 24L26 32.500Q23 36.500 19.500 36.500ZM20 36.400Q21 34 20.800 30Q21 21.500 28.500 21.500Q34 21.500 36 19.500" />
                </svg>
            </div>
            <svg class="camera" width="46" height="37" viewBox="0 0 46 37" fill="none" stroke="#fff" stroke-width="2.700" stroke-linejoin="round">
                <path d="M5 6.500H11Q13 6.500 14.500 4Q16 1.500 18.500 1.500H27.500Q30 1.500 31.500 4Q33 6.500 35 6.500H41Q44.500 6.500 44.500 10V31.500Q44.500 35.200 41 35.200H5Q1.500 35.200 1.500 31.500V10Q1.500 6.500 5 6.500Z" />
                <circle cx="23" cy="20.500" r="9.300" />
                <circle cx="36.500" cy="13.500" r="2.500" fill="#fff" stroke="none" />
            </svg>
            <svg class="mic" width="32" height="46" viewBox="0 0 32 46" fill="none" stroke="#fff" stroke-width="3" stroke-linecap="round">
                <rect x="8" y="1.500" width="16" height="30" rx="8" />
                <path d="M1.500 23.500V25A14.500 13.500 0 0 0 30.500 25V23.500M16 38.500V44.500" />
            </svg>
        </div>
        <div class="home"></div>
    </footer>
</div>

<style>
    :global(body) {
        margin: 0;
        background: #fff;
    }
    .screen {
        display: flex;
        flex-direction: column;
        width: 828px;
        height: 1792px;
        overflow: hidden;
        border-radius: 9px;
        color: #fff;
        font-family: Inter, 'Liberation Sans', sans-serif;
    }
    svg {
        display: block;
        flex: none;
    }
    header {
        height: 184px;
        flex: none;
        background:
            radial-gradient(ellipse 290px 170px at 665px 174px, #394c43 0%, #3c4e45 30%, rgba(70, 82, 75, 0.55) 65%, rgba(90, 91, 88, 0) 100%),
            radial-gradient(ellipse 250px 150px at 210px -10px, #414140 0%, rgba(66, 66, 65, 0.75) 45%, rgba(92, 92, 90, 0) 100%),
            linear-gradient(90deg, #535351, #5e5d5b 45%, #5b5c59);
    }
    .status {
        display: flex;
        justify-content: space-between;
        align-items: center;
        height: 99px;
        padding: 0 33px 0 58px;
    }
    .clock {
        font-size: 31.5px;
        font-weight: 600;
    }
    .status-icons {
        display: flex;
        align-items: center;
    }
    .lte {
        width: 36px;
        margin: 3px 6px 0 8px;
        font-size: 23px;
        letter-spacing: -1.3px;
    }
    .nav {
        display: flex;
        align-items: center;
        height: 82px;
        padding-left: 26px;
    }
    .avatar {
        margin: 0 0 2px 71px;
    }
    .contact {
        width: 150px;
        margin-left: 22px;
        white-space: nowrap;
    }
    .name {
        font-size: 30px;
        font-weight: 600;
        line-height: 35px;
    }
    .presence {
        color: #b0b0ae;
        font-size: 24px;
        line-height: 35px;
        letter-spacing: -0.2px;
    }
    .video {
        margin-left: 283px;
    }
    .phone {
        margin-left: 38px;
    }
    main {
        position: relative;
        flex: none;
        height: 1441px;
        overflow: hidden;
        background: linear-gradient(165deg, #bebcb7, #bfbab4 40%, #c0b8b1);
    }
    .wallpaper {
        position: absolute;
        inset: 0;
        fill: none;
        stroke: #b3ada6;
        stroke-width: 1.7;
    }
    .wallpaper g {
        stroke-width: 5.2;
        stroke-linejoin: round;
        stroke-linecap: round;
    }
    .messages {
        position: relative;
        display: flex;
        flex-direction: column;
        padding: 6px 33px 0;
    }
    .bubble {
        position: relative;
        box-sizing: border-box;
        min-height: 74px;
        margin-bottom: 8px;
        padding: 9px 19px 17px;
        border-radius: 23px;
        background: #242625;
        font-size: 33px;
        line-height: 48px;
        letter-spacing: -0.54px;
        white-space: nowrap;
    }
    .bubble.mine {
        align-self: flex-end;
        background: #144d37;
    }
    .bubble.tall {
        height: 108px;
    }
    .bubble.last {
        margin-bottom: 26px;
    }
    .bubble.heart {
        margin-bottom: 52px;
    }
    .bubble.heart.last {
        margin-bottom: 70px;
    }
    .tail {
        position: absolute;
        left: -12px;
        bottom: 0;
        fill: #242625;
    }
    .mine .tail {
        right: -12px;
        left: auto;
        transform: scaleX(-1);
        fill: #144d37;
    }
    .meta {
        position: absolute;
        right: 19px;
        bottom: 10px;
        display: flex;
        align-items: center;
        gap: 6px;
        color: #9c9e9d;
        font-size: 23px;
        font-variant-numeric: tabular-nums;
        line-height: 28px;
        letter-spacing: 0.4px;
    }
    .mine .meta {
        color: #9fb6ab;
    }
    .reaction {
        position: absolute;
        top: calc(100% - 7px);
        left: 19px;
        display: flex;
        justify-content: center;
        align-items: center;
        box-sizing: border-box;
        width: 72px;
        height: 52px;
        border: 2px solid #0b0c0b;
        border-radius: 26px;
        background: #242625;
    }
    .jump {
        position: absolute;
        top: 1329px;
        right: 18px;
        display: flex;
        justify-content: center;
        align-items: center;
        width: 64px;
        height: 64px;
        border-radius: 50%;
        background: #242625;
    }
    .badge {
        position: absolute;
        top: -18px;
        left: -12px;
        width: 40px;
        height: 40px;
        border-radius: 50%;
        background: #22c063;
        color: #06150c;
        font-size: 25px;
        line-height: 40px;
        text-align: center;
    }
    footer {
        display: flex;
        flex-direction: column;
        align-items: center;
        height: 167px;
        background:
            radial-gradient(ellipse 420px 170px at 300px 150px, #373737 0%, rgba(56, 56, 56, 0.85) 50%, rgba(70, 70, 68, 0) 100%),
            linear-gradient(90deg, #54534e, #474845 40%, #5a5a55 75%, #625e59);
    }
    .composer {
        display: flex;
        align-items: center;
        align-self: stretch;
        margin-top: 19px;
        padding-left: 27px;
    }
    .plus {
        margin-bottom: 2px;
    }
    .input {
        display: flex;
        justify-content: flex-end;
        align-items: center;
        box-sizing: border-box;
        width: 546px;
        height: 64px;
        margin: 0 37px 0 27px;
        padding: 0 22px 1px 0;
        border: 1px solid #686968;
        border-radius: 32px;
        background: rgba(255, 255, 255, 0.11);
    }
    .camera {
        margin: 0 39px 2px 0;
    }
    .mic {
        margin-bottom: 4px;
    }
    .home {
        width: 296px;
        height: 10px;
        margin-top: 58px;
        border-radius: 5px;
        background: #fff;
    }
</style>
